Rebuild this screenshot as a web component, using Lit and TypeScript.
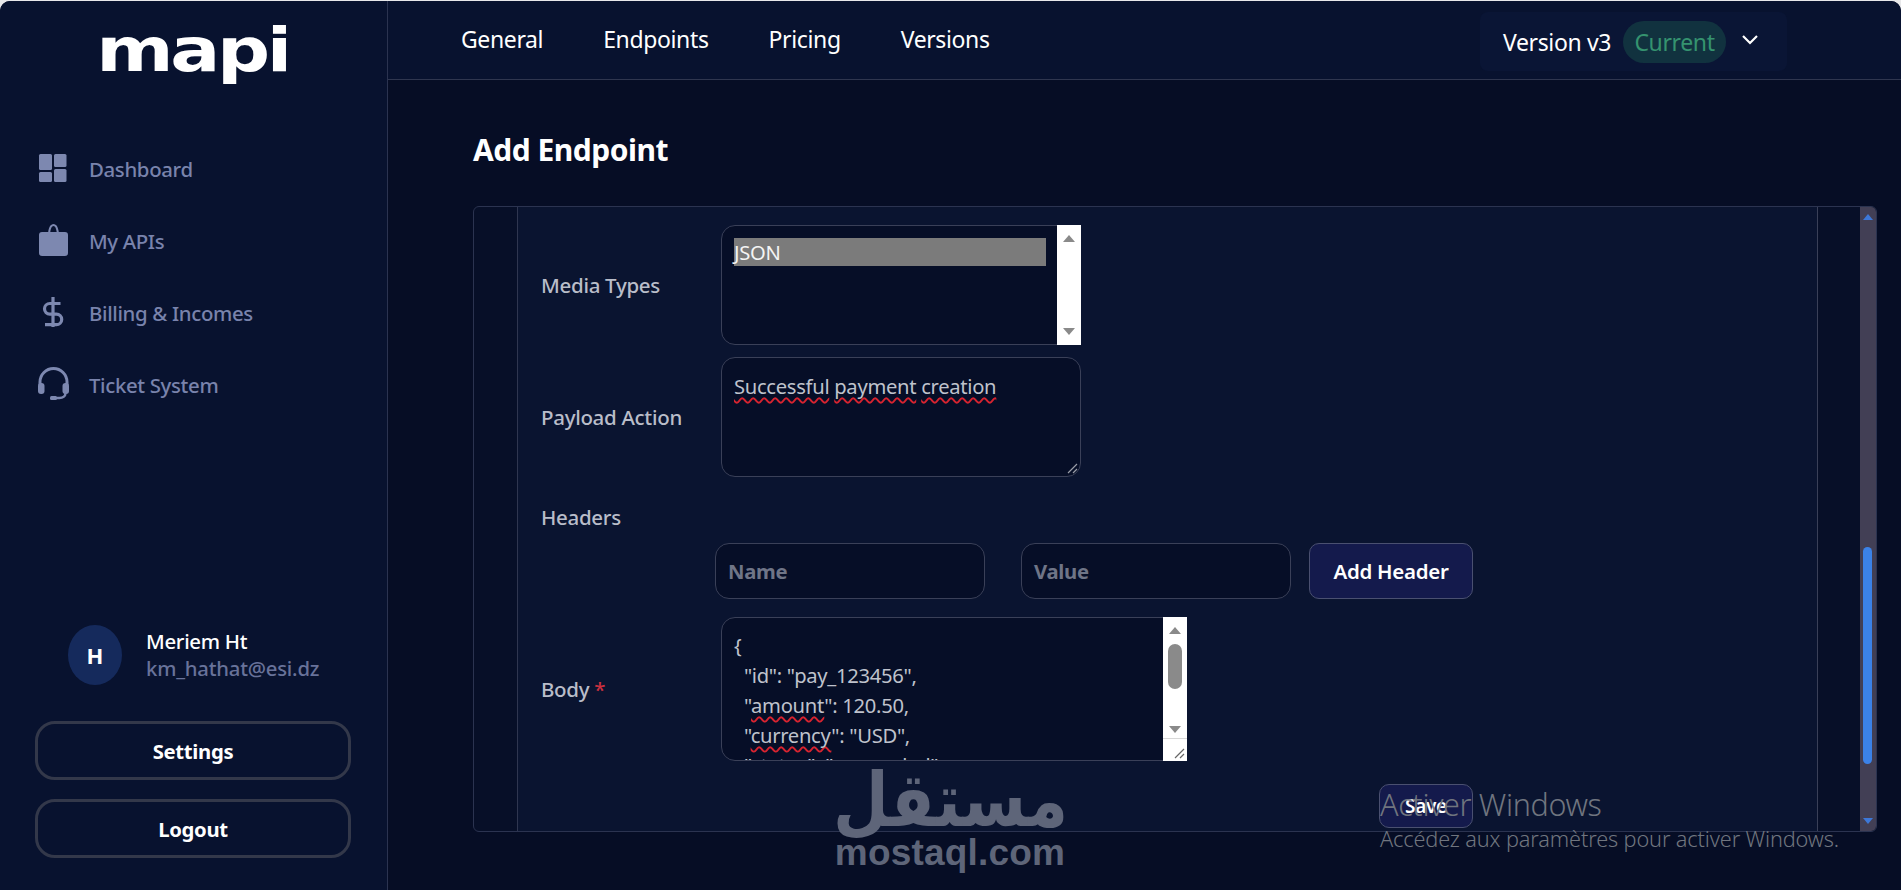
import { LitElement, html, css } from "lit";
import { customElement } from "lit/decorators.js";

@customElement("app-root")
export class AppRoot extends LitElement {
  static styles = css`
    :host { display: block; width: 1901px; height: 890px; background: #e8e8ea; font-family: "Noto Sans", "Open Sans", sans-serif; overflow: hidden; position: relative; }
    .shell { display: grid; grid-template-columns: 388px 1fr; height: 889px; margin-top: 1px; border-radius: 10px 10px 0 0; overflow: hidden; background: #060d25; }
    .side { background: #08122f; border-right: 1px solid #2b3350; display: flex; flex-direction: column; align-items: stretch; }
    .logo { height: 84px; margin-top: 8px; display: flex; justify-content: center; }
    .logo span { font: 700 66px/72px "DejaVu Sans", sans-serif; color: #fff; letter-spacing: -3px; transform: scale(1.125, 0.92); display: block; margin-top: 5px; margin-left: -2px; }
    .nav { display: flex; flex-direction: column; gap: 36px; margin-top: 57px; padding-left: 36px; }
    .nav a { display: flex; align-items: center; height: 36px; box-sizing: border-box; color: #7983ac; font-size: 20.4px; font-weight: 500; letter-spacing: -0.35px; padding-top: 1px; }
    .nav svg { width: 34px; height: 36px; margin-right: 19px; fill: #7d88b0; flex: none; margin-top: -1px; }
    .user { margin-top: auto; display: flex; align-items: center; padding-left: 68px; gap: 24px; }
    .avatar { width: 54px; height: 60px; border-radius: 50%; background: #152a5c; color: #fff; font-weight: 700; font-size: 22px; display: flex; align-items: center; justify-content: center; }
    .uname { color: #fff; font-size: 20.4px; font-weight: 500; line-height: 27px; letter-spacing: -0.3px; }
    .mail { color: #68729a; font-size: 20.3px; line-height: 27px; letter-spacing: -0.2px; font-weight: 500; }
    .btn { margin: 0 36px 0 35px; height: 59px; box-sizing: border-box; border: 3px solid #33384a; border-radius: 20px; color: #fff; font-size: 20.3px; font-weight: 700; letter-spacing: -0.3px; display: flex; align-items: center; justify-content: center; }
    .btn.first { margin-top: 36px; }
    .btn.second { margin-top: 19px; margin-bottom: 32px; }
    .main { display: flex; flex-direction: column; min-width: 0; }
    .top { height: 78px; border-bottom: 1px solid #2f364f; background: #08122f; display: flex; align-items: flex-start; padding-left: 73px; color: #fff; font-size: 23px; letter-spacing: -0.37px; flex: none; }
    .tabs { display: flex; gap: 60px; margin-top: 22px; line-height: 32px; }
    .ver { margin-left: auto; margin-right: 114px; margin-top: 11px; height: 59px; width: 307px; box-sizing: border-box; padding-left: 23px; background: #0a1535; border-radius: 8px; display: flex; align-items: center; }
    .pill { margin-left: 12px; height: 42px; width: 103px; border-radius: 21px; background: #11323f; color: #35936f; display: flex; align-items: center; justify-content: center; }
    .ver svg { width: 18px; height: 12px; margin-left: 15px; margin-top: -3px; fill: none; stroke: #fff; stroke-width: 2.2; }
    .content { padding: 51px 24px 0 85px; }
    h1 { margin: 0; color: #fff; font-size: 30px; font-weight: 700; line-height: 38px; letter-spacing: -0.5px; }
    .card { margin-top: 37px; height: 626px; box-sizing: border-box; border: 1px solid #2b3350; border-radius: 6px; display: grid; grid-template-columns: 43px 1fr 42px 16px; overflow: hidden; background: #070f28; }
    .panel { background: #0a1430; border-left: 1px solid #2f3650; border-right: 1px solid #3a4058; padding: 18px 0 0 23px; min-width: 0; color: #b9bdc9; font-size: 20.5px; letter-spacing: -0.3px; font-weight: 500; overflow: hidden; }
    .row { display: flex; align-items: center; }
    .row label { width: 180px; flex: none; }
    .row + .row { margin-top: 12px; }
    .field { width: 360px; height: 120px; box-sizing: border-box; border: 1px solid #3a4058; border-radius: 14px; background: #060e27; position: relative; font-weight: 400; color: #bfc2cc; font-size: 20.2px; }
    .clip { position: absolute; inset: 0; overflow: hidden; border-radius: 14px; }
    .sb { position: absolute; top: -1px; right: -1px; bottom: -1px; width: 24px; background: #fff; }
    .sb i { position: absolute; left: 6px; width: 0; height: 0; border-left: 6px solid transparent; border-right: 6px solid transparent; }
    .sb .up { top: 10px; border-bottom: 7px solid #8a8a8a; }
    .sb .down { bottom: 10px; border-top: 7px solid #8a8a8a; }
    .opt { position: absolute; left: 12px; top: 12px; width: 312px; height: 28px; background: #7b7b7b; color: #f4f4f4; line-height: 28px; }
    .ta { padding: 14px 12px; line-height: 28px; white-space: pre; }
    .sp { text-decoration: underline wavy #d8232f 1.5px; text-underline-offset: 3px; text-decoration-skip-ink: none; }
    .grip { position: absolute; right: 2px; bottom: 2px; width: 12px; height: 12px; stroke: #9a9da8; fill: none; stroke-width: 1.2; }
    .hl { margin-top: 26px; height: 28px; line-height: 28px; }
    .hrow { display: flex; margin: 12px 0 0 174px; gap: 36px; }
    .inp { width: 270px; height: 56px; box-sizing: border-box; border: 1px solid #3a4058; border-radius: 14px; background: #060e27; color: #6f7587; font-weight: 700; display: flex; align-items: center; padding-left: 12px; font-size: 20.3px; }
    .add { margin-left: -18px; width: 164px; height: 56px; box-sizing: border-box; border: 1px solid #4a5070; border-radius: 10px; background: #141a4c; color: #fff; font-weight: 600; font-size: 20.5px; display: flex; align-items: center; justify-content: center; }
    .body-row { margin-top: 18px !important; align-items: center; height: 144px; }
    .body-box { width: 466px; height: 144px; }
    .body-box .ta { padding: 13px 12px 0; line-height: 29.9px; }
    .thumb { position: absolute; left: 5px; top: 27px; width: 14px; height: 45px; border-radius: 7px; background: #8a8a8a; }
    .body-box .sb .down { bottom: 28px; }
    .corner { position: absolute; right: 0; bottom: 0; width: 24px; height: 22px; background: #fff; border-top: 1px solid #d8d8d8; }
    .corner .grip { stroke: #666; }
    .star { color: #c9303f; }
    .save { margin: 23px 0 0 838px; width: 94px; height: 44px; box-sizing: border-box; border: 1px solid #4a5070; border-radius: 10px; background: #141a4c; color: #fff; font-size: 19px; font-weight: 600; display: flex; align-items: center; justify-content: center; }
    .track { background: #423f55; position: relative; border-radius: 0 4px 4px 0; }
    .track b { position: absolute; left: 3px; width: 9px; top: 340px; height: 217px; background: #3b82e8; border-radius: 5px; }
    .track i { position: absolute; left: 3px; width: 0; height: 0; border-left: 5px solid transparent; border-right: 5px solid transparent; }
    .track .u { top: 7px; border-bottom: 6px solid #3d78d8; }
    .track .d { bottom: 7px; border-top: 6px solid #3d78d8; }
    .wm { position: absolute; left: 800px; top: 762px; width: 300px; color: #5e6579; pointer-events: none; display: flex; flex-direction: column; align-items: center; }
    .wm .ar { font: 700 73px/78px "DejaVu Sans", sans-serif; display: block; height: 78px; transform: scale(0.88, 1.02); white-space: nowrap; }
    .wm .en { font: 700 37px/40px "Liberation Sans", sans-serif; display: block; letter-spacing: 0.2px; margin-top: -7px; }
    .win { position: absolute; left: 1380px; top: 785px; color: #70757f; pointer-events: none; font-weight: 300; }
    .win .a { font-size: 30.5px; line-height: 38px; letter-spacing: -0.35px; display: block; }
    .win .b { font-size: 21.7px; line-height: 26px; display: block; letter-spacing: -0.12px; margin-top: 3px; white-space: nowrap; }
  `;

  render() {
    return html`
      <div class="shell">
        <aside class="side">
          <div class="logo"><span>mapi</span></div>
          <nav class="nav">
            <a><svg viewBox="0 0 34 36"><rect x="3" y="4" width="13" height="16" rx="1.5"/><rect x="3" y="22" width="13" height="10" rx="1.5"/><rect x="18" y="4" width="12.5" height="13" rx="1.5"/><rect x="18" y="19" width="12.5" height="13" rx="1.5"/></svg>Dashboard</a>
            <a><svg viewBox="0 0 34 36"><path d="M6 10h6.2C12.7 5.6 14.6 2 17.500 2s4.800 3.600 5.300 8H29a3 3 0 0 1 3 3v18a3 3 0 0 1-3 3H6a3 3 0 0 1-3-3V13a3 3 0 0 1 3-3Zm8.300 0h6.400C20.300 6.800 19.200 4 17.500 4s-2.800 2.800-3.200 6Z" fill-rule="evenodd"/></svg>My APIs</a>
            <a><svg viewBox="0 0 34 36"><path d="M17 3v30M24.500 9.500H13.800a5.300 5.300 0 0 0 0 10.600h6.600a5.300 5.300 0 0 1 0 10.600H9" fill="none" stroke="#7d88b0" stroke-width="3.200"/></svg>Billing &amp; Incomes</a>
            <a><svg viewBox="0 0 34 36"><path d="M4 19v-3a13.500 13.500 0 0 1 27 0v3" fill="none" stroke="#7d88b0" stroke-width="3"/><rect x="2" y="17" width="6.500" height="11" rx="3"/><rect x="26.500" y="17" width="6.500" height="11" rx="3"/><path d="M29.500 27c0 3.500-3 5-6 5h-5" fill="none" stroke="#7d88b0" stroke-width="2.500"/><rect x="14" y="30" width="7" height="4" rx="1.500"/></svg>Ticket System</a>
          </nav>
          <div class="user">
            <div class="avatar">H</div>
            <div><div class="uname">Meriem Ht</div><div class="mail">km_hathat@esi.dz</div></div>
          </div>
          <div class="btn first">Settings</div>
          <div class="btn second">Logout</div>
        </aside>
        <div class="main">
          <header class="top">
            <div class="tabs"><span>General</span><span>Endpoints</span><span>Pricing</span><span>Versions</span></div>
            <div class="ver">Version v3<span class="pill">Current</span><svg viewBox="0 0 18 12"><path d="M2 2l7 7 7-7"/></svg></div>
          </header>
          <div class="content">
            <h1>Add Endpoint</h1>
            <div class="card">
              <div></div>
              <div class="panel">
                <div class="row"><label>Media Types</label>
                  <div class="field"><div class="clip"><div class="opt">JSON</div></div><div class="sb"><i class="up"></i><i class="down"></i></div></div>
                </div>
                <div class="row"><label>Payload Action</label>
                  <div class="field"><div class="clip"><div class="ta"><span class="sp">Successful</span> <span class="sp">payment</span> <span class="sp">creation</span></div></div>
                    <svg class="grip" viewBox="0 0 12 12"><path d="M11 2L2 11M11 7L7 11"/></svg></div>
                </div>
                <div class="hl">Headers</div>
                <div class="hrow">
                  <div class="inp">Name</div><div class="inp">Value</div><div class="add">Add Header</div>
                </div>
                <div class="row body-row"><label>Body <span class="star">*</span></label>
                  <div class="field body-box"><div class="clip"><div class="ta">{
  "id": "pay_123456",
  "<span class="sp">amount</span>": 120.50,
  "<span class="sp">currency</span>": "USD",
  "status": "succeeded",</div></div>
                    <div class="sb"><i class="up"></i><div class="thumb"></div><i class="down"></i><div class="corner"><svg class="grip" viewBox="0 0 12 12"><path d="M11 2L2 11M11 7L7 11"/></svg></div></div>
                  </div>
                </div>
                <div class="save">Save</div>
              </div>
              <div></div>
              <div class="track"><i class="u"></i><b></b><i class="d"></i></div>
            </div>
          </div>
        </div>
      </div>
      <div class="wm"><span class="ar" lang="ar" dir="rtl">مستقل</span><span class="en">mostaql.com</span></div>
      <div class="win"><span class="a">Activer Windows</span><span class="b">Accédez aux paramètres pour activer Windows.</span></div>
    `;
  }
}
